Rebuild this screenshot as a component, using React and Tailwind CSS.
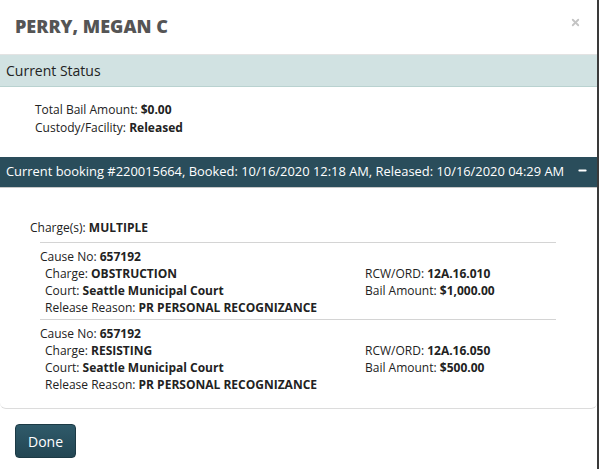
import { Minus, X } from 'lucide-react';

// Booking detail modal: status summary + current booking with its charges.
const CHARGES = [
  {
    cause: '657192',
    charge: 'OBSTRUCTION',
    court: 'Seattle Municipal Court',
    reason: 'PR PERSONAL RECOGNIZANCE',
    rcw: '12A.16.010',
    bail: '$1,000.00',
  },
  {
    cause: '657192',
    charge: 'RESISTING',
    court: 'Seattle Municipal Court',
    reason: 'PR PERSONAL RECOGNIZANCE',
    rcw: '12A.16.050',
    bail: '$500.00',
  },
];

const Field = ({ label, value }) => (
  <div className="leading-[17px]">
    {label}: <span className="font-bold">{value}</span>
  </div>
);

const ChargeBlock = ({ c, first }) => (
  <div className={`ml-[40px] mr-[41px] border-t border-[#d4d4d4] ${first ? 'pt-[5px]' : 'pt-[5px] mt-[3px]'}`}>
    <Field label="Cause No" value={c.cause} />
    <div className="flex pl-[5px]">
      <div className="w-[320px]">
        <Field label="Charge" value={c.charge} />
        <Field label="Court" value={c.court} />
        <Field label="Release Reason" value={c.reason} />
      </div>
      <div>
        <Field label="RCW/ORD" value={c.rcw} />
        <Field label="Bail Amount" value={c.bail} />
      </div>
    </div>
  </div>
);

export default function App() {
  return (
    <div className="flex w-[599px] h-[469px] bg-[#3a3a3a] font-['Open_Sans',sans-serif] text-[12px] text-[#222]">
      <div className="w-[597px] h-full bg-white flex flex-col">
        {/* Header */}
        <div className="h-[54px] flex items-center justify-between pl-[15px] pr-[16px]">
          <h1 className="text-[18px] font-extrabold text-[#555] mb-[2px]">PERRY, MEGAN C</h1>
          <X className="w-[11px] h-[11px] text-[#c4c4c4] mb-[9px]" strokeWidth={4} />
        </div>

        {/* Current status */}
        <div className="h-[33px] flex items-center px-[6px] bg-[#d1e2e2] border-t border-[#e3e3e3] border-b border-b-[#b9d2d0] text-[14px] text-[#222]">
          Current Status
        </div>
        <div className="pl-[35px] pt-[14px] pb-[20px]">
          <div className="leading-[18px]">Total Bail Amount: <span className="font-bold">$0.00</span></div>
          <div className="leading-[18px]">Custody/Facility: <span className="font-bold">Released</span></div>
        </div>

        {/* Current booking */}
        <div className="flex-1 flex flex-col">
          <div className="h-[31px] flex items-center justify-between pl-[6px] pr-[9px] bg-[#2a4d5b] text-white text-[12.9px] border-b border-[#c8c8c8]">
            <span>Current booking #220015664, Booked: 10/16/2020 12:18 AM, Released: 10/16/2020 04:29 AM</span>
            <Minus className="w-[11px] h-[11px] mb-[4px]" strokeWidth={4} />
          </div>
          <div className="h-[221px] rounded-b-[6px] border-b border-[#dcdcdc]">
            <div className="pl-[30px] pt-[31px] pb-[6px] leading-[17px]">
              Charge(s): <span className="font-bold">MULTIPLE</span>
            </div>
            {CHARGES.map((c, i) => (
              <ChargeBlock key={i} c={c} first={i === 0} />
            ))}
          </div>
          <div className="pl-[15px] pt-[15px]">
            <button
              type="button"
              className="w-[61px] h-[34px] rounded-[4px] border border-[#1c3a45] bg-gradient-to-b from-[#2f5a6a] to-[#234653] text-white text-[14px]"
            >
              Done
            </button>
          </div>
        </div>
      </div>
    </div>
  );
}
